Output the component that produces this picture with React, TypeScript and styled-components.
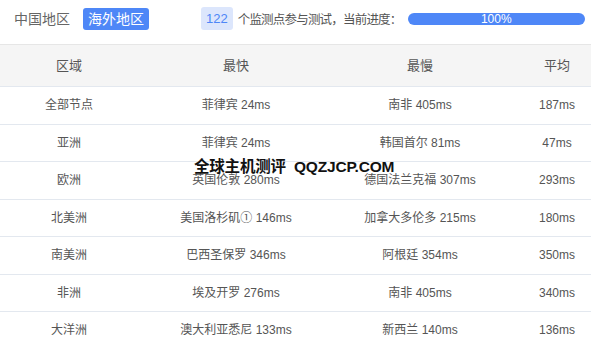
import React from "react";
import styled, { createGlobalStyle } from "styled-components";

const Global = createGlobalStyle`
  html, body { margin: 0; padding: 0; background: #fff; }
  body { font-family: "Liberation Sans", "Noto Sans CJK SC", sans-serif; overflow: hidden; }
`;

const Page = styled.div`
  position: relative;
  width: 591px;
  height: 347px;
  overflow: hidden;
  background: #fff;
`;

const TopBar = styled.div`
  box-sizing: border-box;
  height: 45px;
  padding: 7px 6px 0 9px;
  display: flex;
  align-items: flex-start;
  border-bottom: 1px solid #e6e6e6;
`;

const TopRow = styled.div`
  display: flex;
  align-items: center;
  height: 23px;
  width: 100%;
`;

const Tab = styled.div<{ $active?: boolean }>`
  height: 22px;
  line-height: 22px;
  padding: 0 5px;
  border-radius: 3px;
  font-size: 14px;
  color: ${(p) => (p.$active ? "#fff" : "#666")};
  background: ${(p) => (p.$active ? "#4e87f7" : "transparent")};
  margin-right: 8px;
`;

const Count = styled.div`
  margin-left: 44px;
  height: 23px;
  line-height: 23px;
  padding: 0 5px;
  border-radius: 3px;
  background: #dce6fc;
  color: #4e87f7;
  font-size: 13px;
`;

const Info = styled.div`
  margin-left: 5px;
  font-size: 12.5px;
  color: #555;
  letter-spacing: -0.8px;
  white-space: nowrap;
`;

const Progress = styled.div`
  flex: 1;
  margin-left: 6px;
  height: 12px;
  border-radius: 6px;
  background: #4e87f7;
  color: #fff;
  font-size: 12px;
  line-height: 12px;
  text-align: center;
`;

const Table = styled.div`
  display: grid;
  grid-template-columns: 138px 196px 172px 102px;
  width: 608px;
`;

const HeadCell = styled.div`
  height: 41px;
  line-height: 41px;
  text-align: center;
  background: #f5f5f5;
  color: #555;
  font-size: 13px;
  border-bottom: 1px solid #e3e8ef;
`;

const Cell = styled.div`
  box-sizing: border-box;
  height: 37.5px;
  line-height: 36.5px;
  text-align: center;
  color: #555;
  font-size: 12px;
  border-bottom: 1px solid #e3e8ef;
  white-space: nowrap;
`;

const Watermark = styled.div`
  position: absolute;
  left: 194px;
  top: 154px;
  font-size: 15.5px;
  font-weight: bold;
  color: #111;
  white-space: nowrap;
  letter-spacing: -0.2px;
  font-family: "Liberation Sans", "Noto Sans CJK SC", sans-serif;
`;

const rows = [
  ["全部节点", "菲律宾 24ms", "南非 405ms", "187ms"],
  ["亚洲", "菲律宾 24ms", "韩国首尔 81ms", "47ms"],
  ["欧洲", "英国伦敦 280ms", "德国法兰克福 307ms", "293ms"],
  ["北美洲", "美国洛杉矶① 146ms", "加拿大多伦多 215ms", "180ms"],
  ["南美洲", "巴西圣保罗 346ms", "阿根廷 354ms", "350ms"],
  ["非洲", "埃及开罗 276ms", "南非 405ms", "340ms"],
  ["大洋洲", "澳大利亚悉尼 133ms", "新西兰 140ms", "136ms"],
];

export default function App() {
  return (
    <Page>
      <Global />
      <TopBar>
        <TopRow>
          <Tab>中国地区</Tab>
          <Tab $active>海外地区</Tab>
          <Count>122</Count>
          <Info>个监测点参与测试，当前进度：</Info>
          <Progress>100%</Progress>
        </TopRow>
      </TopBar>
      <Table>
        {["区域", "最快", "最慢", "平均"].map((h) => (
          <HeadCell key={h}>{h}</HeadCell>
        ))}
        {rows.map((r, i) =>
          r.map((c, j) => <Cell key={i + "-" + j}>{c}</Cell>)
        )}
      </Table>
      <Watermark>全球主机测评&nbsp;&nbsp;QQZJCP.COM</Watermark>
    </Page>
  );
}
